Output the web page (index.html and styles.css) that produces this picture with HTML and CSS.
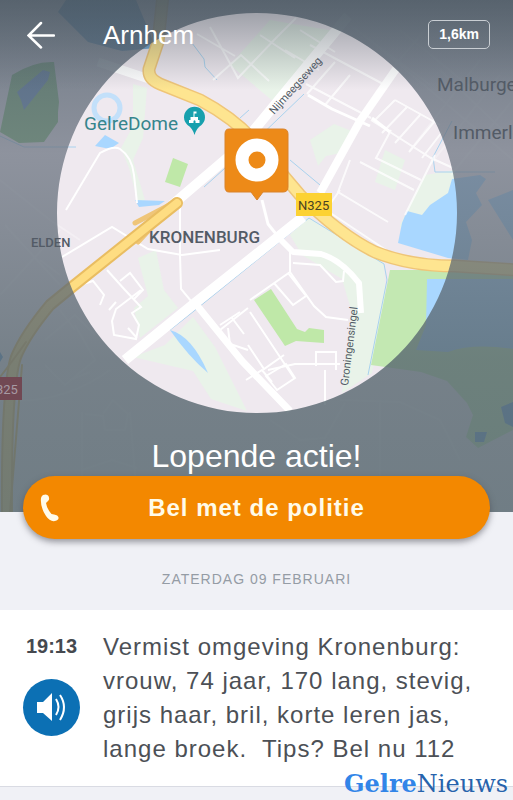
FILE: index.html
```html
<!DOCTYPE html>
<html lang="nl">
<head>
<meta charset="UTF-8">
<meta name="viewport" content="width=device-width, initial-scale=1">
<title>Arnhem - Lopende actie</title>
<link rel="stylesheet" href="styles.css">
</head>
<body>
<header class="hero">
  <svg class="map" viewBox="0 0 513 512" preserveAspectRatio="xMidYMid slice" role="img" aria-label="Kaart van Kronenburg">
    <defs>
      <linearGradient id="shade" x1="0" y1="0" x2="0" y2="1">
        <stop offset="0" stop-color="#53616e" stop-opacity=".83"/>
        <stop offset=".3" stop-color="#68717e" stop-opacity=".72"/>
        <stop offset=".7" stop-color="#56656e" stop-opacity=".79"/>
        <stop offset="1" stop-color="#56676f" stop-opacity=".83"/>
      </linearGradient>
      <linearGradient id="topShade" x1="0" y1="0" x2="0" y2="1">
        <stop offset="0" stop-color="#46525c" stop-opacity=".55"/>
        <stop offset="1" stop-color="#46525c" stop-opacity="0"/>
      </linearGradient>
    </defs>

    <rect width="513" height="512" fill="#efe9ef"/>

    <!-- parken -->
    <g fill="#e9f3e9">
      <path d="M133 84l14 4-4 50 -10 22 12 40-6 6-10-38-8-20 12-22z"/>
      <path d="M138 258l18-8 8 40 14 18-38 30-6-30 14-12z"/>
      <path d="M165 345l28-28 22 30 32 64-36-12-18-28-60-14z"/>
      <path d="M310 140l24-16 20 8-8 20-20 4-8 10z"/>
      <path d="M385 150l20 10-10 30-20-8z"/>
      <path d="M290 235l18-18 76 46 2 40-14 70-30 20 10-80-10-34-40-24z"/>
      <path d="M400 225l25-50 30-5 0 65-50 10z"/>
      <path d="M230 65l40-45 70 12-60 75z"/>
    </g>
    <g fill="#bfe8a8">
      <path d="M254 300l17-11 26 40 8 3 4-4 15 2v13l-28-2-11 5z"/>
      <path d="M173 158l15 6-8 23-15-5z"/>
      <path d="M390 270h123v160l-35 18-12-11 7-22-6-12-20-22-26-9-50-7z" fill="#c3e8b2"/>
      <path d="M12 75q22-14 42-13l5 40-1 10 0 10-14 20-25 1-19-11z" fill="#82c079"/>
    </g>

    <!-- water -->
    <g fill="#a9d7ff">
      <path d="M66 0h70l20 48-34 3-34-9-30-30z" fill="#6fa4d0"/>
      <path d="M398 243l4-20 5-12 15 4 8-10 18-12 4-14 28-4 6 4-10 14 6 12-16 17 6 18-4 20-20-2z"/>
      <path d="M427 279h86v70q-40-6-65 3l-32-2 10-25z"/>
      <path d="M488 200l25-10v50z"/>
      <path d="M17 92l26-22 7 2-2 8-24 30-3-10z" fill="#6695cd"/>
      <path d="M95 146l10-11 14 8-9 6z"/>
      <path d="M170 330q22 6 38 43-20-17-38-43z"/>
      <path d="M135 200l30 1-6 4-20 2z"/>
      <circle cx="107" cy="108" r="13" fill="none" stroke="#c3e0fa" stroke-width="5"/>
      <path d="M501 407l12-5v25l-8-4zM475 432l12 0-3 10-9 0zM0 352l3 5-3 5z" fill="#70a6dc"/>
    </g>
    <g fill="none" stroke="#a9d2ee" stroke-width="1">
      <path d="M170 330l24-19 115-93 75 46 3 16-19 95"/>
      <path d="M0 136l24 11h52M192 43l12 16 1 8 12 13M204 187l50-45 50-48M290 160l30 25M240 118l9-8M452 121l-19 36 2 15h60"/>
    </g>

    <!-- kleine straten -->
    <g fill="none" stroke="#fff" stroke-width="2">
      <path d="M66 210l34-57q14-8 20-4 12 8 14 26l3 28M62 257l50-30 36 22 34 6 38-5M180 200v55l1 34 15 18"/>
      <path d="M107 270l18 20 16 17-9 6 7 12-3 14-22-4-2-14 4-12 25-19M83 284l10-3 11 14-4 10M120 281l10-8 13 17-9 9M128 328l9 10M109 310l7-8"/>
      <g opacity=".8">
        <path d="M210 27l28 51 38-40 20-20M213 80l28-25 28 26M235 56l-38-22M300 30l35 22M285 50l34 20M260 35l35 23M320 50l-24 28M335 62l-28 32M350 75l-25 30M310 45l75 40M306 84l65 34"/>
        <path d="M395 100l45 25M371 120l60 38 22 10M395 100l-22 22M407 107l-25 26M420 115l-25 28M434 122l-25 30M442 132l-20 26M391 130l-15 28 45 22M435 155l-30 60M360 162l54 28M350 160l-12 32 50 30M340 190l-14 20 60 40"/>
      </g>
      <path d="M290 250v22l-40 28M274 283l19 22 13-9-18-23M290 272l24 34 12 11 22 3M293 263l27 2 16 17 7-1 1-10M250 312l44 66M220 330l28-22M228 328l2 16 18 6M246 380l16-10 10 12M268 370l27-6h45M316 366v-14h20v18M325 370v35"/>
      <path d="M240 312l-20 13M232 318l12 16M248 345l16 24 20-14M266 376l20-12 9 14-18 12z"/>
    </g>
    <g fill="none" stroke="#fff" stroke-width="2" opacity=".3">
      <path d="M0 180l50 40 30 20M5 225l55 60M0 295l60-65M40 260l20 15M60 310l15 20M45 340l30-25 20 20M45 365l20 20 30-25-20-35M70 380l20-8M0 400q60 6 110-30M82 412v100M85 414l18 2 2 14h20l3-16-15-14-10 14M130 412l8 100M82 470l30-10 25 8M270 420l30 20 25-2 20-35M340 400l60 2 40 18 20 40M380 400v80"/>
      <path d="M370 40l60 50 83 70M400 30l80 65M440 70l73 70M480 60l-70 90M500 75l-70 90M513 100l-62 75M395 65l30-35M350 25l80 60"/>
    </g>

    <!-- hoofdwegen -->
    <g fill="none" stroke="#fff" stroke-linejoin="round">
      <path d="M125 360l70-57 108-86" stroke-width="10"/>
      <path d="M172 205l68-58 80-97 28-34" stroke-width="10"/>
      <path d="M195 303l47 58 48 50" stroke-width="7"/>
      <path d="M280 239l13 13 28 2q20 6 38 29l2 30" stroke-width="6"/>
      <path d="M320 193l40-72 36-52" stroke-width="8"/>
      <path d="M308 95l24 14 38 17M372 118l18 14M262 200l6 24 12 15" stroke-width="3"/>
      <path d="M98 62l54 18" stroke-width="9"/>
    </g>
    <g fill="none" stroke-linejoin="round" stroke-linecap="round">
      <path d="M163-5l-5 47-9 27q-1 10 11 15l40 16q34 18 55 42l45 53q40 40 75 57 35 14 80 14l63 4" stroke="#efc578" stroke-width="13"/>
      <path d="M163-5l-5 47-9 27q-1 10 11 15l40 16q34 18 55 42l45 53q40 40 75 57 35 14 80 14l63 4" stroke="#fee590" stroke-width="10"/>
      <path d="M135 223l40-21-37 40" stroke="#efc578" stroke-width="5"/>
      <path d="M177 203l-105 84-22 18q-25 30-34 52-10 30-9 160" stroke="#e9bd62" stroke-width="12"/>
      <path d="M177 203l-105 84-22 18q-25 30-34 52-10 30-9 160" stroke="#fedd82" stroke-width="8"/>
      <path d="M26 342q-14 20-26 35M22 365l-12 147" stroke="#e9bd62" stroke-width="2"/>
    </g>

    <!-- alles buiten de cirkel wordt gedimd -->
    <path fill="url(#shade)" fill-rule="evenodd" d="M0 0h513v512H0zM57 213a200 200 0 1 0 400 0a200 200 0 1 0-400 0z"/>
    <rect width="513" height="90" fill="url(#topShade)"/>

    <!-- labels -->
    <g class="labels">
      <text class="place dome" x="84" y="130">GelreDome</text>
      <text class="place" x="437" y="91">Malburgen</text>
      <text class="place" x="453" y="139">Immerloo</text>
      <text class="district" x="149" y="243">KRONENBURG</text>
      <text class="small" x="31" y="247">ELDEN</text>
      <text class="street" transform="translate(274 115) rotate(-48)">Nijmeegseweg</text>
      <text class="street" transform="translate(348 386) rotate(-83)">Groningensingel</text>
    </g>
    <rect x="296" y="193" width="36" height="23" fill="#fcd233"/>
    <text class="road" x="298" y="210">N325</text>
    <rect x="-12" y="377" width="34" height="23" fill="#714853"/>
    <text class="road road-dim" x="-4" y="394">325</text>

    <!-- pin GelreDome -->
    <path d="M194.500 135q-2-7-7-10a10.500 10.500 0 1 1 14 0q-5 3-7 10z" fill="#17a0ad"/>
    <path d="M189 123v-3h1.500v-3h3v-5.500h3v2h-2v3.500h3.500v3h1.500v3h-4v-2q-1-1.500-2 0v2z" fill="#fff"/>

    <!-- marker -->
    <path d="M229 129h54q5 0 5 5v53q0 5-5 5h-20l-6 8-6-8h-22q-4 0-4-5v-53q0-5 4-5z" fill="#ed8a18" stroke="#d9832a"/>
    <circle cx="257" cy="160" r="15" fill="none" stroke="#fff" stroke-width="13"/>
  </svg>

  <div class="topbar">
    <button class="back" type="button" aria-label="Terug">
      <svg width="28" height="28" viewBox="0 0 28 28" fill="none" stroke="#fff" stroke-width="2.500" stroke-linecap="round">
        <path d="M14 2L1.500 14.500L14 26.500M2 14.500h25"/>
      </svg>
    </button>
    <h1 class="city">Arnhem</h1>
    <span class="distance">1,6km</span>
  </div>
  <h2 class="status">Lopende actie!</h2>
</header>

<main class="content">
  <button class="call" type="button">
    <svg class="phone" width="20" height="28" viewBox="0 0 20 28" fill="#fffbe9">
      <path d="M3 1Q7-0.500 8.500 2Q10 5.500 8 7L6 9Q7 15 11.500 20L14 20.500Q18 21 18.500 23.500Q19 26 15 27Q10 28 6 22Q0 13 1 4Q1.500 2 3 1z"/>
    </svg>
    Bel met de politie
  </button>
  <p class="date">ZATERDAG 09 FEBRUARI</p>
  <article class="message">
    <div class="side">
      <time class="time" datetime="19:13">19:13</time>
      <button class="listen" type="button" aria-label="Voorlezen">
        <svg width="57" height="57" viewBox="0 0 57 57">
          <path d="M14 23h6l9-9v28l-9-8h-6z" fill="#fff"/>
          <path d="M33 20q5 8 0 16M37 16q8 12 0 25" fill="none" stroke="#fff" stroke-width="2"/>
        </svg>
      </button>
    </div>
    <p class="text">Vermist omgeving Kronenburg: vrouw, 74 jaar, 170 lang, stevig, grijs haar, bril, korte leren jas, lange broek.&nbsp; Tips? Bel nu 112</p>
  </article>
  <div class="source"><b>Gelre</b>Nieuws</div>
</main>
</body>
</html>
```
FILE: styles.css
```css
* {
  box-sizing: border-box;
}
body {
  margin: 0;
  min-height: 100vh;
  display: flex;
  flex-direction: column;
  background-color: #f0f1f6;
  font-family: "Liberation Sans", Arial, sans-serif;
  color: #4c5056;
}
h1, h2, p {
  margin: 0;
  font-weight: normal;
}
button {
  border: 0;
  padding: 0;
  background: none;
  font-family: inherit;
  cursor: pointer;
}
svg {
  display: block;
}

/* kaart */
.hero {
  position: relative;
  min-height: 512px;
  display: flex;
  flex-direction: column;
  justify-content: space-between;
  padding: 20px 23px 38px;
  color: #fff;
  overflow: hidden;
}
.map {
  position: absolute;
  top: 0;
  left: 0;
  width: 100%;
  height: 100%;
}
.labels {
  fill: #535b66;
}
.labels, .road {
  font-family: Roboto, sans-serif;
}
.place {
  font-size: 19px;
}
.dome {
  fill: #36858d;
}
.district {
  font-size: 17px;
  font-weight: 500;
}
.small {
  font-size: 13px;
  font-weight: 500;
}
.street {
  font-size: 11px;
}
.road {
  font-size: 13px;
  fill: #4a4223;
}
.road-dim {
  fill: #a79aa3;
}
.topbar {
  position: relative;
  display: flex;
  align-items: center;
  height: 29px;
}
.back {
  width: 80px;
  padding-left: 4px;
}
.city {
  flex: 1;
  font-size: 26px;
  line-height: 28px;
}
.distance {
  padding: 0 10px;
  border: 1px solid #c9ced3;
  border-radius: 5px;
  font-size: 14px;
  font-weight: bold;
  line-height: 27px;
}
.status {
  position: relative;
  font-size: 32px;
  line-height: 36px;
  text-align: center;
}

/* melding */
.content {
  position: relative;
  flex: 1;
}
.call {
  position: relative;
  display: block;
  width: calc(100% - 46px);
  height: 63px;
  margin: -36px auto 0;
  border-radius: 32px;
  background-color: #f38800;
  box-shadow: 0 3px 6px rgba(60, 60, 70, 0.5);
  color: #fffbe9;
  font-size: 24px;
  font-weight: bold;
  letter-spacing: 1px;
}
.phone {
  position: absolute;
  left: 17px;
  top: 18px;
}
.date {
  padding: 30px 0 21px;
  color: #959ca5;
  font-size: 14px;
  line-height: 20px;
  letter-spacing: 1px;
  text-align: center;
}
.message {
  display: flex;
  gap: 23px;
  padding: 20px 23px;
  background-color: #fff;
  border-bottom: 1px solid #d9dbe3;
}
.side {
  width: 57px;
  flex: none;
  display: flex;
  flex-direction: column;
  align-items: center;
  gap: 17px;
}
.time {
  font-size: 20px;
  font-weight: bold;
  line-height: 32px;
  color: #45494f;
}
.listen {
  border-radius: 50%;
  background-color: #0c70b4;
}
.text {
  flex: 1;
  font-size: 24px;
  line-height: 34px;
  letter-spacing: 1px;
}
.source {
  position: absolute;
  right: 5px;
  bottom: 0;
  color: #2763ac;
  font-family: "DejaVu Serif", serif;
  font-size: 24px;
  line-height: 32px;
}
.source b {
  color: #3285e8;
}
```
